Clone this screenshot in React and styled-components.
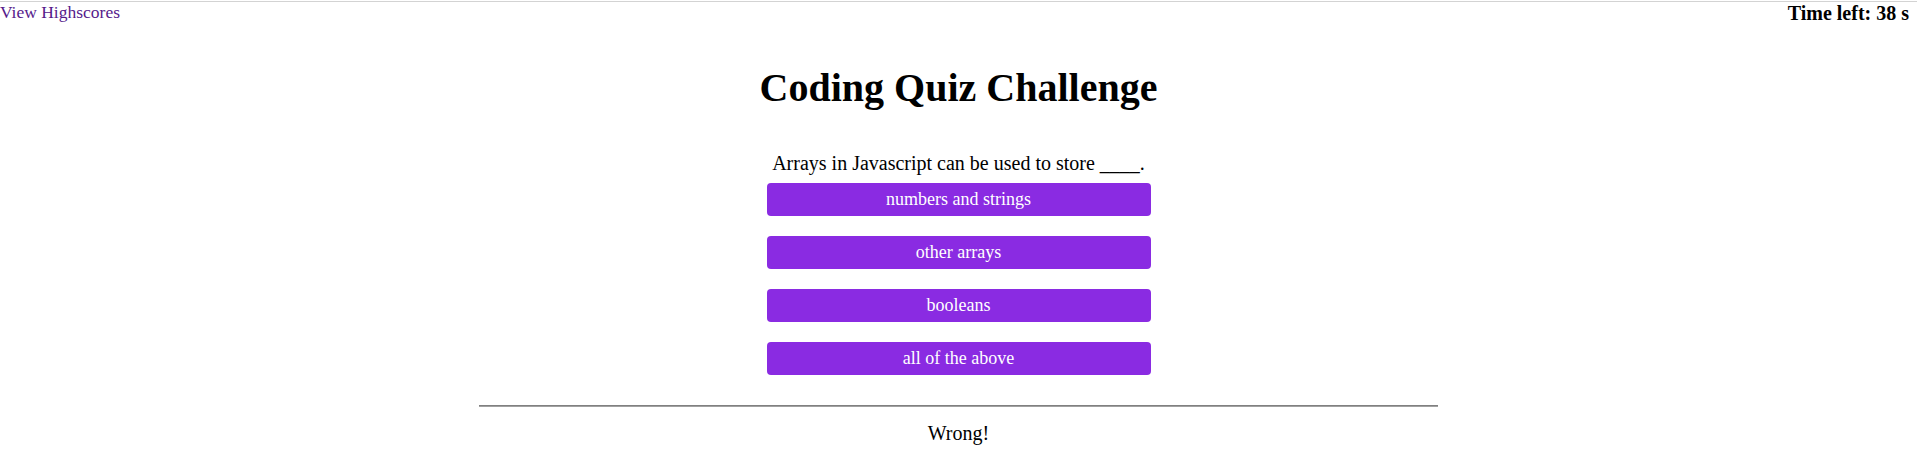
import React from "react";
import styled, { createGlobalStyle } from "styled-components";

const GlobalStyle = createGlobalStyle`
  body {
    margin: 0;
    background: #ffffff;
    font-family: "Liberation Serif", "Times New Roman", serif;
    color: #000000;
  }
`;

const choices = ["numbers and strings", "other arrays", "booleans", "all of the above"];

const App = () => {
  return (
    <>
      <GlobalStyle />
      <Header>
        <HighscoreLink href="#highscores">View Highscores</HighscoreLink>
        <Timer>Time left: 38 s</Timer>
      </Header>
      <Main>
        <Title>Coding Quiz Challenge</Title>
        <Question>Arrays in Javascript can be used to store ____.</Question>
        <ChoiceList>
          {choices.map((choice) => (
            <ChoiceButton key={choice}>{choice}</ChoiceButton>
          ))}
        </ChoiceList>
        <Divider />
        <Feedback>Wrong!</Feedback>
      </Main>
    </>
  );
};

const Header = styled.header`
  display: flex;
  justify-content: space-between;
  align-items: flex-start;
  margin-top: 1px;
  border-top: 1px solid #d3d3d3;
  padding-right: 8px;
`;

const HighscoreLink = styled.a`
  font-size: 17.5px;
  color: #551a8b;
  text-decoration: none;
`;

const Timer = styled.div`
  font-size: 20px;
  font-weight: bold;
`;

const Main = styled.main`
  display: flex;
  flex-direction: column;
  align-items: center;
`;

const Title = styled.h1`
  font-size: 40px;
  margin: 39px 0 41px;
`;

const Question = styled.p`
  font-size: 20px;
  margin: 0 0 8px;
`;

const ChoiceList = styled.div`
  display: flex;
  flex-direction: column;
  gap: 20px;
`;

const ChoiceButton = styled.button`
  width: 384px;
  height: 33px;
  background-color: #8a2be2;
  color: #ffffff;
  border: none;
  border-radius: 4px;
  font-family: "Liberation Serif", "Times New Roman", serif;
  font-size: 18px;
  cursor: pointer;
`;

const Divider = styled.hr`
  width: 50%;
  margin: 30px 0 0;
  border: none;
  border-top: 1px solid #808080;
  border-bottom: 1px solid #a0a0a0;
`;

const Feedback = styled.p`
  font-size: 20px;
  margin: 15px 0 0;
`;

export default App;
